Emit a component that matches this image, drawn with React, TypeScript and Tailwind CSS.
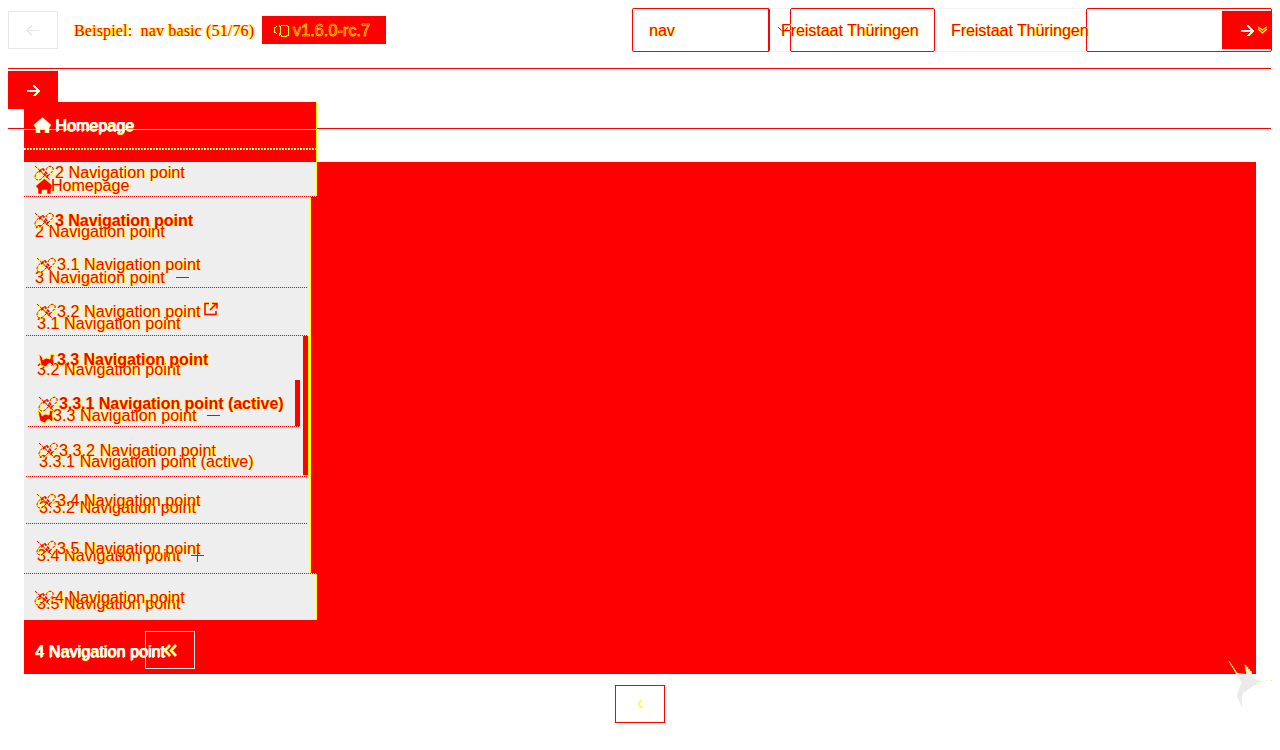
import React from "react";

const FRINGE = "text-[#ff0000] [text-shadow:1px_0_#ffff00,-1px_0_#ffff0066]";
const DOTS = "bg-[repeating-linear-gradient(90deg,#ff0000_0px,#ff0000_1px,#ffff00_1px,#ffff00_2px)]";

function Arrow({ left = false, className = "" }: { left?: boolean; className?: string }) {
  return (
    <svg width="14" height="13" viewBox="0 0 14 13" fill="none" className={className} shapeRendering="crispEdges">
      {left ? (
        <path d="M13 6.5H1M6 1.5l-5 5 5 5" stroke="currentColor" />
      ) : (
        <>
          <path d="M1 7h12M7.5 1.5L13 7l-5.5 5" stroke="#ff0" strokeWidth="2" />
          <path d="M1 6.5h12M7.5 1L13 6.5 7.5 12" stroke="#fff" strokeWidth="1.5" />
        </>
      )}
    </svg>
  );
}

function LinkIcon() {
  return (
    <svg width="21" height="17" viewBox="0 0 21 17" fill="none">
      <g stroke="#ff0" strokeWidth="1.5" strokeDasharray="3 1">
        <path d="M1 1l15 14M9 5C5 6 2 9 2 12c0 3 4 4 6 2l3-3M12 5c1-4 6-5 7-2 1 3-2 4-4 7h5" />
      </g>
      <g stroke="#f00" strokeWidth="1" strokeDasharray="3 1.2">
        <path d="M1 1l15 14M8 4C4 6 1 9 1 12c0 3 4 4 6 2l3-3M12 5c1-4 6-5 7-2 1 3-2 4-4 7" />
        <path d="M5 7l4-3 5 6-1 2-4-4" strokeWidth="1.8" />
      </g>
    </svg>
  );
}

function HomeIcon({ white = false }: { white?: boolean }) {
  return (
    <svg width="19" height="16" viewBox="0 0 19 16">
      <path d="M9.5 .5L18 8l-2 3v5h-4v-4H7v4H3v-5L.7 8z" fill={white ? "#fff" : "#f00"} stroke="#ff0" strokeWidth=".6" />
    </svg>
  );
}

function BlobIcon() {
  return (
    <svg width="18" height="16" viewBox="0 0 18 16">
      <path d="M1 2l3 3 1 3 3-2 4 1 1-5 2 1 2-1-2 4 1 5-1 3-3-3-2 1-2 3-5-2-1-5z" fill="#f00" stroke="#ff0" strokeWidth=".8" />
    </svg>
  );
}

function ExternalIcon() {
  return (
    <svg width="14" height="14" viewBox="0 0 14 14" fill="none">
      <path d="M5 1.5H1v11h11V9M8 1.5h5v5M13 1L6 8" stroke="#ff0" strokeWidth="2" />
      <path d="M5 1.5H1v11h11V9M8 1.5h5v5M13 1L6 8" stroke="#f00" strokeWidth="1.5" />
    </svg>
  );
}

function Dots({ className }: { className: string }) {
  return <div className={`h-px ${className} ${DOTS}`} />;
}

type Row = { label: string; h: string; pad: string; bold?: boolean; icon?: "link" | "blob"; ext?: boolean; line?: string; sign?: "−" | "+"; shift?: string };

const frontRows: Row[] = [
  { label: "2 Navigation point", h: "h-[47px]", pad: "pl-[10px]", icon: "link", line: "w-[293px]" },
  { label: "3 Navigation point", h: "h-[47px]", pad: "pl-[10px]", icon: "link", bold: true },
  { label: "3.1 Navigation point", h: "h-[44px]", pad: "pl-[12px]", icon: "link", line: "ml-[2px] w-[282px]", shift: "pb-[1px]" },
  { label: "3.2 Navigation point", h: "h-[48px]", pad: "pl-[12px]", icon: "link", ext: true, line: "ml-[2px] w-[282px]" },
  { label: "3.3 Navigation point", h: "h-[46px]", pad: "pl-[14px]", icon: "blob", bold: true, shift: "pt-[1px]" },
  { label: "3.3.1 Navigation point (active)", h: "h-[45px]", pad: "pl-[14px]", icon: "link", bold: true, line: "ml-1 w-[272px]" },
  { label: "3.3.2 Navigation point", h: "h-[50px]", pad: "pl-[14px]", icon: "link", line: "ml-[2px] w-[282px]", shift: "pb-[2px]" },
  { label: "3.4 Navigation point", h: "h-[47px]", pad: "pl-[12px]", icon: "link", line: "ml-[2px] w-[282px]", shift: "pt-[2px]" },
  { label: "3.5 Navigation point", h: "h-[50px]", pad: "pl-[12px]", icon: "link", line: "w-[293px]" },
  { label: "4 Navigation point", h: "h-[46px]", pad: "pl-[10px]", icon: "link", shift: "pt-[2px]" },
];

const backRows: Row[] = [
  { label: "2 Navigation point", h: "h-[46px]", pad: "pl-[11px]" },
  { label: "3 Navigation point", h: "h-[46px]", pad: "pl-[11px]", sign: "−" },
  { label: "3.1 Navigation point", h: "h-[46px]", pad: "pl-[13px]" },
  { label: "3.2 Navigation point", h: "h-[46px]", pad: "pl-[13px]" },
  { label: "3.3 Navigation point", h: "h-[46px]", pad: "pl-[13px]", icon: "blob", sign: "−" },
  { label: "3.3.1 Navigation point (active)", h: "h-[46px]", pad: "pl-[15px]" },
  { label: "3.3.2 Navigation point", h: "h-[46px]", pad: "pl-[15px]" },
  { label: "3.4 Navigation point", h: "h-[48px]", pad: "pl-[13px]", sign: "+", shift: "pt-px" },
  { label: "3.5 Navigation point", h: "h-[48px]", pad: "pl-[13px]", shift: "pt-px" },
];

function NavRow({ row, front }: { row: Row; front: boolean }) {
  return (
    <div className={`flex flex-col ${row.h}`}>
      <div className={`flex min-h-0 flex-1 items-center ${row.pad} ${row.shift ?? ""}`}>
        {row.icon && (
          <span className={front ? (row.icon === "blob" ? "w-[19px] shrink-0" : "w-[21px] shrink-0") : "w-4 shrink-0"}>
            {row.icon === "blob" ? <BlobIcon /> : <LinkIcon />}
          </span>
        )}
        <span className={`whitespace-nowrap ${FRINGE} ${row.bold ? "font-bold tracking-[-0.04px]" : "tracking-[0.1px]"}`}>{row.label}</span>
        {row.ext && <span className="ml-1 pb-[5px]"><ExternalIcon /></span>}
        {row.sign && (
          <svg className="-mt-px ml-[11px]" width="13" height="13" viewBox="0 0 13 13" shapeRendering="crispEdges">
            <path d={row.sign === "+" ? "M0 6.5h13M6.5 0v13" : "M0 6.5h13"} stroke="#f00" />
          </svg>
        )}
      </div>
      {row.line && <Dots className={row.line} />}
    </div>
  );
}

export default function App() {
  return (
    <div className="relative grid h-[750px] w-[1280px] overflow-hidden bg-white font-['Liberation_Sans',sans-serif] text-[16px] leading-5">
      {/* page surfaces */}
      <div className="flex flex-col [grid-area:1/1]">
        <header className="mr-[9px] ml-2 flex h-[69px] items-start border-b border-[#ff0000]">
          <div className="mt-[11px] flex h-[38px] w-[50px] items-center justify-center border border-[#e8e8e8] text-[#e8e8e8]">
            <Arrow left />
          </div>
          <div className="mt-[21px] ml-4 w-[188px] whitespace-pre font-['Liberation_Serif',serif] tracking-[0.15px] text-[#ff0000] [text-shadow:1px_0_#ffff00,-1px_0_#ffff00,2px_0_#e0e0e0]">Beispiel:  nav basic (51/76)</div>
          <div className="mt-4 flex h-7 w-[124px] items-center bg-[#ff0000] pt-px pl-3">
            <svg width="15" height="13" viewBox="0 0 15 13" fill="none" stroke="#ff0" shapeRendering="crispEdges">
              <path d="M3 2L.5 4v4L3 10M5 1v2M5 9v3M7.5 1h5l2 2v8l-2 1h-5l-1-2V3z" />
            </svg>
            <span className="ml-1 text-[#ff0000] tracking-[0.15px] [-webkit-text-stroke:0.6px_#ff0]">v1.6.0-rc.7</span>
          </div>
          <div className="mt-2 ml-[246px] flex h-11 w-[138px] items-center rounded-[2px] border border-r-2 border-[#ff0000] pt-px pl-4">
            <span className={FRINGE}>nav</span>
          </div>
          <div className="mt-2 flex h-11 w-5 items-center justify-end border-y border-[#f2f2f2]">
            <svg width="12" height="12" viewBox="0 0 12 12"><path d="M0 3l5 5 5-5" stroke="#f00" fill="none" /></svg>
          </div>
          <div className="mt-2 flex h-11 w-[145px] items-center rounded-[2px] border border-[#ff0000] pt-px">
            <span className={`-ml-[10px] whitespace-nowrap tracking-[-0.05px] ${FRINGE}`}>Freistaat Thüringen</span>
          </div>
          <div className="mt-2 flex h-11 w-[151px] items-center border-y border-[#f2f2f2] pt-px pl-4">
            <span className={`z-10 whitespace-nowrap tracking-[-0.05px] ${FRINGE}`}>Freistaat Thüringen</span>
          </div>
          <div className="mt-2 -mr-px flex h-11 flex-1 items-center justify-end rounded-[2px] border border-[#ff0000]">
            <div className="flex h-[38px] w-[49px] items-center bg-[#ff0000] pl-[18px]">
              <Arrow />
              <svg className="ml-[3px]" width="11" height="8" viewBox="0 0 11 8" fill="none">
                <path d="M1 1l4.5 3L10 1M1 3l4.5 4L10 3" stroke="#ff0" strokeWidth="1.3" />
              </svg>
            </div>
          </div>
        </header>
        <div className="mr-[9px] ml-2 flex h-[60px] items-start border-b border-[#ff0000]">
          <div className="mt-[2px] flex h-[38px] w-[50px] items-center justify-center bg-[#ff0000]"><Arrow /></div>
        </div>
        <div className="mx-6 mt-[33px] flex h-[512px] flex-col bg-[#ff0000]">
          <div className="h-[34px] w-[293px] border-r border-[#ff0] bg-[#eeeeee]" />
          <div className="flex h-[377px] w-[287px] border-r border-[#ff0] bg-[#eeeeee]">
            <div className="mt-[184px] ml-[271px] h-[46px] w-[5px] bg-[#ff0000]" />
            <div className="mt-[139px] ml-[3px] h-[140px] w-[6px] border-r border-[#ff0] bg-[#ff0000]" />
          </div>
          <div className="h-[47px] w-[293px] border-r border-[#ff0] bg-[#eeeeee]" />
          <div className="flex h-[54px] pl-[11px]">
            <span className="w-[110px] pt-[22px] whitespace-nowrap text-white tracking-[0.1px] [text-shadow:1px_0_#fff,0_1px_#ff0]">4 Navigation point</span>
            <div className="mt-[11px] flex h-[38px] w-[50px] items-center justify-center border border-[#ffe7e7]">
              <svg width="13" height="13" viewBox="0 0 13 13" fill="none">
                <path d="M6 1L1 6.5 6 12M12 1L7 6.5l5 5.5" stroke="#ff0" strokeWidth="2.8" />
                <path d="M6 1L1.5 6.5 6 12M12 1L7 6.5l5 5" stroke="#fff" strokeWidth="1.4" />
              </svg>
            </div>
          </div>
        </div>
        <div className="mt-[11px] flex h-[38px] w-[50px] items-center justify-center self-center border border-[#ff0000]">
          <svg width="6" height="10" viewBox="0 0 6 10"><path d="M5 1L2 4v2l3 3" stroke="#ff0" strokeWidth="1.5" fill="none" /></svg>
        </div>
      </div>

      {/* lower navigation labels */}
      <div className="ml-6 flex w-[293px] flex-col pt-[163px] [grid-area:1/1]">
        <div className="flex h-[46px] items-center pl-[11px]">
          <HomeIcon />
          <span className={`-ml-[3px] ${FRINGE}`}>Homepage</span>
        </div>
        {backRows.map((row) => <NavRow key={row.label} row={row} front={false} />)}
      </div>

      {/* upper navigation labels */}
      <div className="ml-6 flex w-[293px] flex-col pt-[102px] [grid-area:1/1]">
        <div className="flex h-12 flex-col border-r border-[#ff0] bg-[#ff0000]">
          <div className="flex h-[46px] items-center bg-[linear-gradient(#ffff00,#ffff00)] bg-[length:100%_1px] bg-[position:0_27px] bg-no-repeat pl-[9px]">
            <HomeIcon white />
            <span className="ml-[3px] pt-px text-white tracking-[0.1px] [text-shadow:1px_0_#fff,0_1px_#ff0]">Homepage</span>
          </div>
          <div className="h-px bg-[repeating-linear-gradient(90deg,#ffffff_0px,#ffffff_1px,#ffff00_1px,#ffff00_2px,#ff0000_2px,#ff0000_3px)]" />
          <div className="h-px bg-[repeating-linear-gradient(90deg,#ffffff_0px,#ffffff_1px,#ffff00_1px,#ffff00_2px,#ff0000_2px,#ff0000_3px)]" />
        </div>
        <div className="-mb-3 h-3 w-[293px] border-r border-[#ff0] bg-[#ff0000]" />
        {frontRows.map((row) => <NavRow key={row.label} row={row} front />)}
      </div>

      <svg className="absolute top-[650px] left-[1215px]" width="65" height="65" viewBox="0 0 195 195">
        <path d="M42 34L66 69 94 72 90 45l20 22 4 17 22 9 35-2-37 5-24 15-16 11-12 10-1 40-15-33 9-32 6-8-19-29z" fill="#eaeaea" />
        <path d="M86 100l35 4M66 70l47 24M94 72l40 23M86 100v53M73 84l13 16" stroke="#fff" strokeWidth="1" opacity=".7" />
        <path d="M42 34l24 36M90 45l6 26M90 45l20 22M84 100h4M120 104h4M132 94h4M168 91h4" stroke="#ff0" strokeWidth="3.5" strokeDasharray="6 2" fill="none" />
      </svg>
    </div>
  );
}
